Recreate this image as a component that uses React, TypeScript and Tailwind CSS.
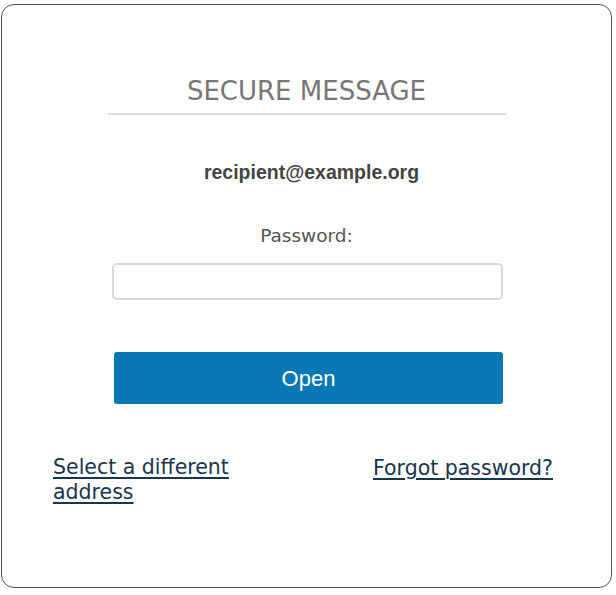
export default function App() {
  return (
    <div className="h-[595px] w-[616px] bg-white pl-[1px] pt-[4px]">
      <div className="flex h-[584px] w-[611px] flex-col rounded-[13px] border border-[#555] bg-white">
        {/* Heading */}
        <div className="mx-auto mt-[70px] w-[398px] border-b-2 border-[#dcdcdc] pb-[6px] text-center">
          <h1 className="text-[26px] leading-[32px] text-[#777] [font-family:'DejaVu_Sans',Verdana,sans-serif]">
            SECURE MESSAGE
          </h1>
        </div>

        <div className="mt-[45px] pl-[10px] text-center text-[19.5px] font-bold leading-[24px] text-[#444] [font-family:'Liberation_Sans',Arial,sans-serif]">
          recipient@example.org
        </div>

        <label className="mt-[40px] text-center text-[18.5px] leading-[24px] text-[#555] [font-family:'DejaVu_Sans',Verdana,sans-serif]">
          Password:
        </label>

        <input
          type="password"
          className="mt-[15px] ml-[110px] h-[37px] w-[391px] rounded-[5px] border-2 border-[#dadada] bg-white outline-none"
        />

        <button className="mt-[52px] ml-[112px] h-[52px] w-[389px] rounded-[3px] bg-[#0778b4] text-[22px] text-white [font-family:'Liberation_Sans',Arial,sans-serif]">
          Open
        </button>

        {/* Links */}
        <div className="mt-[51px] flex pl-[51px] pr-[58px] text-[20.5px] leading-[25px] text-[#17354d] [font-family:'DejaVu_Sans',Verdana,sans-serif]">
          <div className="w-1/2">
            <a href="#" className="underline decoration-2 underline-offset-[3px]">
              Select a different address
            </a>
          </div>
          <div className="w-1/2 pt-[1px] text-right">
            <a href="#" className="underline decoration-2 underline-offset-[3px]">
              Forgot password?
            </a>
          </div>
        </div>
      </div>
    </div>
  );
}
